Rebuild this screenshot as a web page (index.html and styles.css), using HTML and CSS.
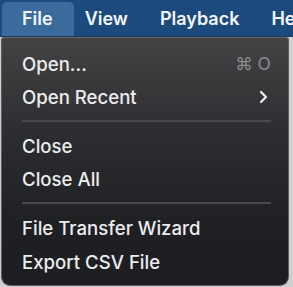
FILE: index.html
```html
<!DOCTYPE html>
<html>
<head>
<meta charset="utf-8">
<link rel="stylesheet" href="styles.css">
</head>
<body>
<div class="bar">
  <div class="bar-item active">File</div>
  <div class="bar-item">View</div>
  <div class="bar-item">Playback</div>
  <div class="bar-item">Help</div>
</div>
<div class="menu">
  <div class="row"><span>Open...</span><span class="shortcut">⌘ O</span></div>
  <div class="row"><span>Open Recent</span><svg class="chev" width="9" height="14" viewBox="0 0 9 14"><path d="M2 2 L7 7 L2 12" fill="none" stroke="#f2f2f2" stroke-width="2.2" stroke-linecap="round" stroke-linejoin="round"/></svg></div>
  <div class="sep"></div>
  <div class="row"><span>Close</span></div>
  <div class="row"><span>Close All</span></div>
  <div class="sep"></div>
  <div class="row"><span>File Transfer Wizard</span></div>
  <div class="row"><span>Export CSV File</span></div>
</div>
</body>
</html>
```
FILE: styles.css
```css
html, body {
  margin: 0;
  padding: 0;
}
body {
  width: 293px;
  height: 287px;
  overflow: hidden;
  background: #cfcfd1;
  font-family: Inter, "Noto Sans", sans-serif;
}
.bar {
  height: 37px;
  background: #1d4a7c;
  display: flex;
  align-items: stretch;
  padding-left: 2px;
  box-sizing: border-box;
  padding-top: 2px;
  border-bottom: 1px solid #173a62;
  white-space: nowrap;
  overflow: hidden;
}
.bar-item {
  color: #f4f6f9;
  font-size: 18px;
  font-weight: 600;
  display: flex;
  align-items: center;
  padding: 0 16px 2px;
}
.bar-item.active {
  background: #3a6b9c;
  border-radius: 5px 5px 0 0;
  padding: 0 21px 2px 20px;
  margin-right: -5px;
}
.menu {
  margin: 0 4px 0 1px;
  height: 249px;
  box-sizing: border-box;
  border: 1px solid #5e5e60;
  border-top-color: #6a6a6c;
  border-radius: 3px 3px 9px 9px;
  background: linear-gradient(to bottom, #434345 0%, #2c2d30 40%, #1f2023 75%, #1d1e21 100%);
  padding: 9px 0 0 0;
  color: #ececee;
  font-size: 18.6px;
  font-weight: 500;
}
.row {
  height: 33px;
  display: flex;
  align-items: center;
  justify-content: space-between;
  padding: 0 18px 0 20px;
  white-space: nowrap;
}
.row:nth-last-child(-n+2) {
  height: 34px;
}
.shortcut {
  color: #8c8c8f;
  font-weight: 400;
  font-size: 17.5px;
  margin-right: -1px;
}
.chev {
  margin-right: 2px;
}
.sep {
  height: 2px;
  background: #49494c;
  margin: 7px 17px 7px 20px;
}
```
